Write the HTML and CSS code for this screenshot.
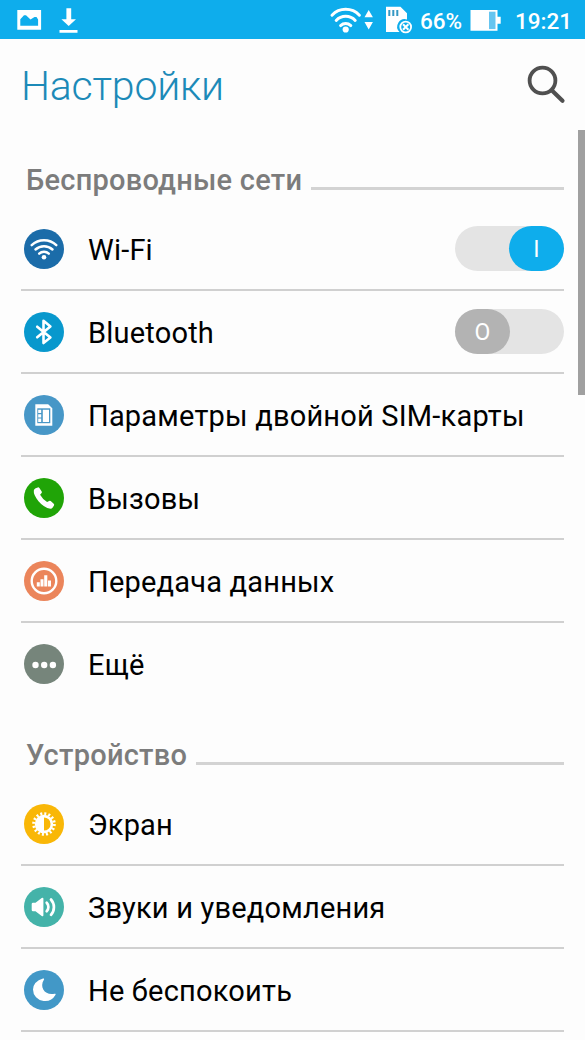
FILE: index.html
```html
<!DOCTYPE html>
<html lang="ru">
<head>
<meta charset="utf-8">
<title>Настройки</title>
<link rel="stylesheet" href="styles.css">
</head>
<body>
<div class="screen">
  <div class="status">
    <svg class="status-left" width="80" height="39" viewBox="0 0 80 39">
      <path fill="#fff" fill-rule="evenodd" d="M17.3 10h23.8v19.8H17.3zM20.300 25.800h17.800v-6.300l-1.600-2.600h-2l-4 2.600-4.500-4.200h-2l-3.700 4z"/>
      <path fill="#fff" d="M66.400 8.300h4.800v11h4.800L68.700 26l-7.300-6.700h5zM59.500 30h18v2.700h-18z"/>
    </svg>
    <svg class="status-net" width="90" height="39" viewBox="325 0 90 39">
      <g fill="none" stroke="#fff" stroke-width="3" stroke-linecap="round">
        <path d="M332 15.200a19 19 0 0 1 27.400 0"/>
        <path d="M336.200 20.500a13 13 0 0 1 19 0"/>
        <path d="M340.600 25.600a7.500 7.500 0 0 1 10.200 0"/>
      </g>
      <circle cx="345.700" cy="29.500" r="3.100" fill="#fff"/>
      <path fill="#fff" d="M368.700 10l4.200 7.200h-8.400zM368.700 29.500l4.200-7.500h-8.400z"/>
      <path fill="#fff" d="M386 6.800h14.500l6.500 6.500v6.200a7.500 7.500 0 0 0-7.500 12.500h-13.500z"/>
      <path stroke="#3598c4" stroke-width="2" d="M389.300 10v6M393.300 10v6M397.300 10v6"/>
      <circle cx="405.700" cy="27" r="5.400" fill="none" stroke="#fff" stroke-width="1.800"/>
      <path stroke="#fff" stroke-width="2" d="M403 24.300l5.400 5.400M408.400 24.300l-5.400 5.400"/>
    </svg>
    <span class="percent">66%</span>
    <svg class="battery" width="32" height="39" viewBox="470 0 32 39">
      <path fill="#fff" d="M470.500 10h27v6.800h3.200v7h-3.200v7h-27z"/>
      <path fill="#66c5f0" d="M489 11.700h6.500v17.400H489z"/>
    </svg>
    <span class="clock">19:21</span>
  </div>

  <div class="header">
    <h1 class="title">Настройки</h1>
    <svg class="search" width="42" height="42" viewBox="525 64 42 42">
      <circle cx="542.500" cy="80.500" r="12.900" fill="none" stroke="#505050" stroke-width="3.800"/>
      <path stroke="#505050" stroke-width="4.200" stroke-linecap="round" d="M552.500 91l10 9.700"/>
    </svg>
  </div>

  <div class="section"><h2 class="section-title">Беспроводные сети</h2><div class="rule"></div></div>
  <div class="list">
    <div class="row">
      <svg class="icon" viewBox="0 0 40 40"><circle cx="20" cy="20" r="20" fill="#1b6ca9"/>
        <g fill="none" stroke="#fff" stroke-width="2.500" stroke-linecap="round"><path d="M7.700 16.200a18 18 0 0 1 24.600 0M11.500 20.500a12.500 12.500 0 0 1 17 0M15.200 24.600a7 7 0 0 1 9.600 0"/></g>
        <circle cx="20" cy="28.300" r="2.300" fill="#fff"/></svg>
      <span class="label">Wi-Fi</span>
      <div class="switch on"><div class="thumb">I</div></div>
    </div>
    <div class="row">
      <svg class="icon" viewBox="0 0 40 40"><circle cx="20" cy="20" r="20" fill="#0898cd"/>
        <path fill="none" stroke="#fff" stroke-width="2.600" stroke-linejoin="round" stroke-linecap="round" d="M13.200 14.700l13.200 10.800-6.900 5.500V8.800l6.900 5.700-13.200 10.800"/></svg>
      <span class="label">Bluetooth</span>
      <div class="switch off"><div class="thumb">O</div></div>
    </div>
    <div class="row">
      <svg class="icon" viewBox="0 0 40 40"><circle cx="20" cy="20" r="20" fill="#4797c7"/>
        <path fill="#fff" d="M11.300 9.300h12.900l4.100 3.900v17.500h-17z"/>
        <path fill="#4797c7" d="M13.300 13.300h13v14.900h-13z"/>
        <path fill="#fff" d="M14.200 14.800h3v3.300h-3zM14.200 19.200h3v3.300h-3zM14.200 23.600h3v3.300h-3zM18.800 14.800H25v12.100h-6.200z"/></svg>
      <span class="label">Параметры двойной SIM-карты</span>
    </div>
    <div class="row">
      <svg class="icon" viewBox="0 0 40 40"><circle cx="20" cy="20" r="20" fill="#20a407"/>
        <path fill="#fff" d="M11.600 10.200l2.200-.8q1-.3 1.600.6l2.300 3.400q.5.900-.1 1.700l-1.500 1.700q2.600 4.800 7 7.100l2-1q.8-.4 1.600.2l3 2.600q.8.800.3 1.700l-1.300 2.100q-.8 1.200-2.300 1.200Q20 29.700 14.500 23.200 9.300 17 9.800 12.600q.2-1.800 1.800-2.400z"/></svg>
      <span class="label">Вызовы</span>
    </div>
    <div class="row">
      <svg class="icon" viewBox="0 0 40 40"><circle cx="20" cy="20" r="20" fill="#eb855b"/>
        <circle cx="20" cy="20" r="12.300" fill="none" stroke="#fff" stroke-width="2.400"/>
        <path fill="#fff" d="M12.800 21.200h3v4.300h-3zM16.500 18.200h3v7.300h-3zM20.200 14.300h3.100v11.200h-3.100zM24 19.500h3v6h-3z"/></svg>
      <span class="label">Передача данных</span>
    </div>
    <div class="row last">
      <svg class="icon" viewBox="0 0 40 40"><circle cx="20" cy="20" r="20" fill="#76857b"/>
        <g fill="#fff"><circle cx="11.500" cy="21" r="3.200"/><circle cx="20.200" cy="21" r="3.200"/><circle cx="28.900" cy="21" r="3.200"/></g></svg>
      <span class="label">Ещё</span>
    </div>
  </div>

  <div class="section"><h2 class="section-title">Устройство</h2><div class="rule"></div></div>
  <div class="list">
    <div class="row">
      <svg class="icon" viewBox="0 0 40 40"><circle cx="20" cy="20" r="20" fill="#f9b707"/>
        <circle cx="20" cy="20" r="10.300" fill="none" stroke="#fff" stroke-width="3" stroke-dasharray="2 2.045"/>
        <circle cx="20" cy="20" r="7.900" fill="none" stroke="#fff" stroke-width="2.600"/>
        <path fill="#fff" d="M20 12.500v15a7.500 7.500 0 0 1 0-15z"/></svg>
      <span class="label">Экран</span>
    </div>
    <div class="row">
      <svg class="icon" viewBox="0 0 40 40"><circle cx="20" cy="20" r="20" fill="#44b3a9"/>
        <path fill="#fff" d="M9 15.700h2.500l6.200-4.700q1.700-1 1.700.8v16.400q0 1.800-1.700.8l-6.200-4.700H9q-1.300 0-1.300-1.300v-6q0-1.300 1.300-1.300z"/>
        <path fill="none" stroke="#fff" stroke-width="2.700" stroke-linecap="round" d="M22.700 15.800a6 6 0 0 1 0 8.400M27 12.500a11.500 11.500 0 0 1 0 15.300"/></svg>
      <span class="label">Звуки и уведомления</span>
    </div>
    <div class="row">
      <svg class="icon" viewBox="0 0 40 40"><circle cx="20" cy="20" r="20" fill="#4298c7"/>
        <path fill="#fff" d="M19 8.500c.9-.4 1.500.3.900 1.200-5 7.800 1.600 16.200 10.700 14 1-.2 1.400.5.800 1.300A12 12 0 0 1 19.600 31 11.500 11.500 0 0 1 9 19.500Q9.300 11.500 19 8.500z"/></svg>
      <span class="label">Не беспокоить</span>
    </div>
  </div>
  <div class="scrollbar"></div>
</div>
</body>
</html>
```
FILE: styles.css
```css
* { box-sizing: border-box; }
body { margin: 0; font-family: Roboto, "Noto Sans", sans-serif; background: #fdfdfd; }
.screen { position: relative; width: 585px; height: 1040px; overflow: hidden; background: #fdfdfd; }
svg { display: block; flex: none; }
h1, h2 { margin: 0; white-space: nowrap; }

.status { display: flex; height: 39px; background: #0eadec; color: #fff; font-size: 22.500px; font-weight: 500; line-height: 43px; }
.status-net { margin-left: 245px; }
.percent { width: 55px; padding-left: 5px; white-space: nowrap; }
.clock { margin-left: 13px; white-space: nowrap; }

.header { display: flex; justify-content: space-between; height: 92px; padding: 25px 18px 0 21px; }
.title { margin-top: -1px; font-size: 41px; font-weight: 300; line-height: 46px; letter-spacing: -0.200px; color: #1c8ab8; }

.section { display: flex; height: 77px; padding: 32px 21px 0 26px; }
.section-title { font-size: 29px; font-weight: 500; line-height: 34px; letter-spacing: 0.250px; color: #7c7c7c; }
.rule { flex: 1; height: 3px; margin: 24px 0 0 9px; background: #d3d3d3; }

.list { padding: 0 21px; }
.row { display: flex; align-items: center; height: 83px; padding-left: 3px; border-bottom: 2px solid #d0d0d0; }
.row.last { border-bottom-color: transparent; }
.icon { width: 40px; height: 40px; }
.label { margin-left: 24px; padding-top: 3px; font-size: 29px; line-height: 34px; letter-spacing: 0.200px; color: #000; white-space: nowrap; }

.switch { display: flex; width: 109px; height: 45px; margin-left: auto; border-radius: 23px; background: #e4e4e4; }
.switch.on { justify-content: flex-end; }
.thumb { width: 55px; height: 45px; border-radius: 23px; background: #b3b3b3; color: #fff; font-size: 23px; line-height: 47px; text-align: center; }
.on .thumb { background: #0eadec; }

.scrollbar { position: absolute; right: 0; top: 130px; width: 7px; height: 265px; background: #a0a0a0; }
```
